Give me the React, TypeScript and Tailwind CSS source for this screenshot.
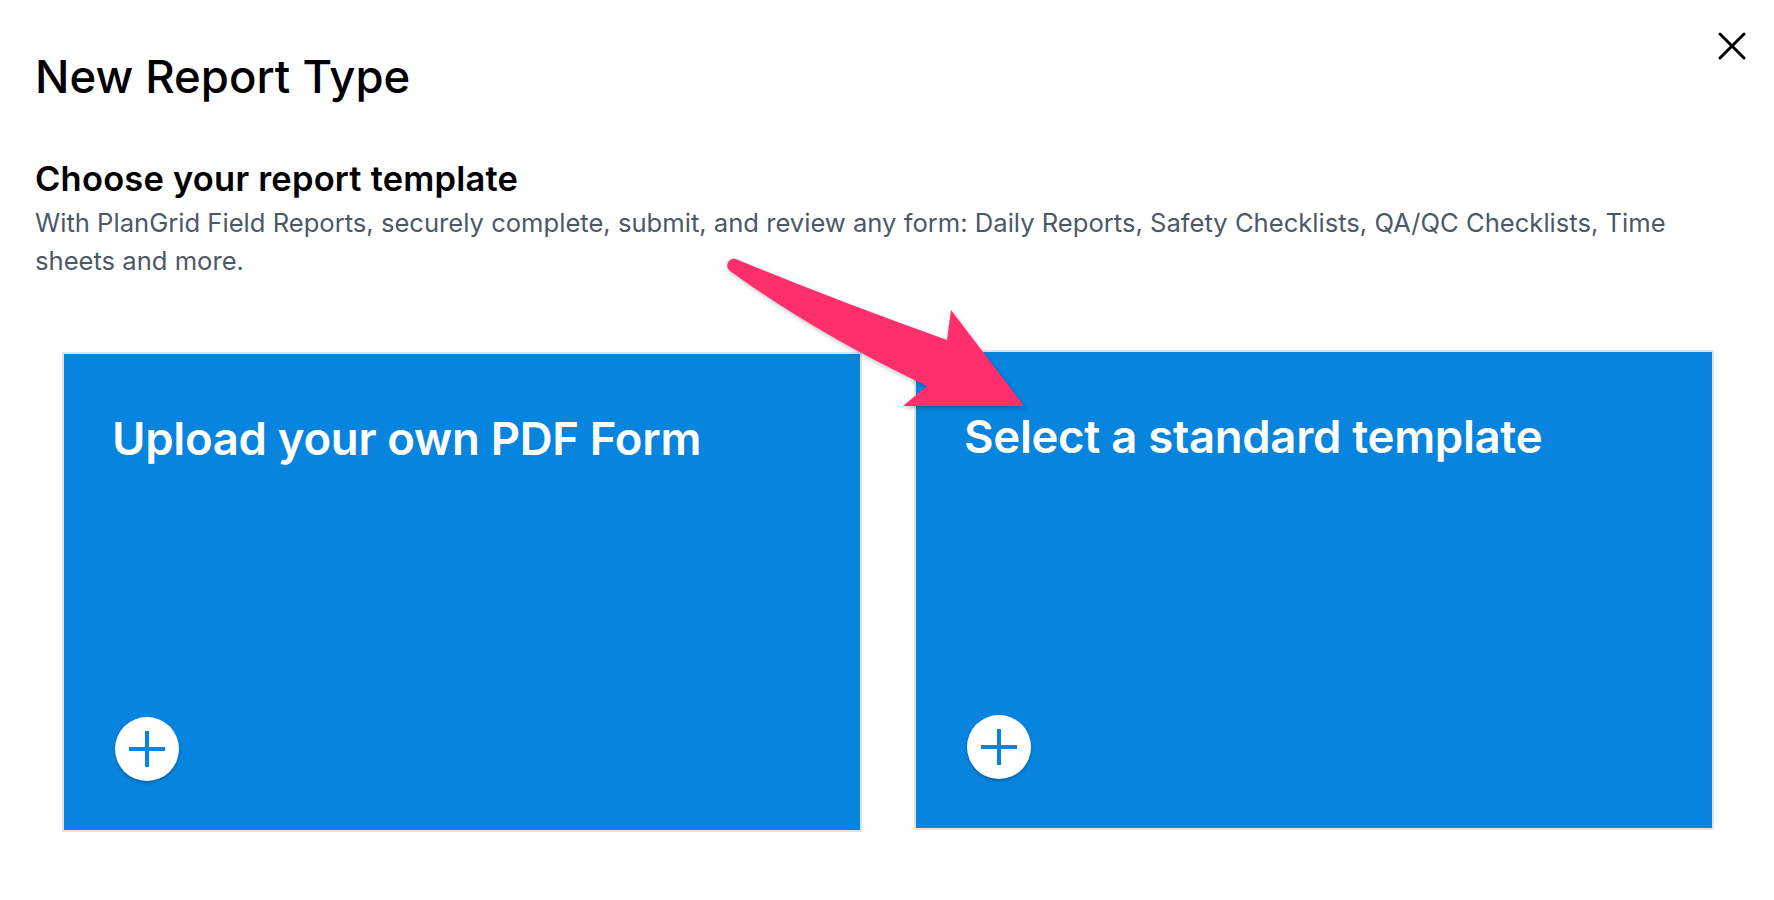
function TemplateCard({ title, lift }: { title: string; lift?: boolean }) {
  return (
    <div
      className={
        "flex h-[480px] w-[800px] flex-col justify-between border-2 border-[#dfe5ea] bg-[#0784de] pt-[62px] pr-[48px] pb-[49px] pl-[48px] " +
        (lift ? "" : "mt-[2px]")
      }
    >
      <h3 className="text-[45.5px] font-semibold leading-none tracking-[-0.3px] text-white">{title}</h3>
      <button className="ml-[3px] flex h-[64px] w-[64px] items-center justify-center rounded-full bg-white shadow-[0_2px_3px_rgba(0,0,0,0.25)]">
        <svg viewBox="0 0 36 36" className="h-[36px] w-[36px]" stroke="#0784de" strokeWidth="4">
          <line x1="18" y1="0" x2="18" y2="36" />
          <line x1="0" y1="18" x2="36" y2="18" />
        </svg>
      </button>
    </div>
  );
}

export default function App() {
  return (
    <div className="relative min-h-screen bg-white font-['Inter','Liberation_Sans',sans-serif] text-black">
      <button className="absolute top-[32px] right-[28px] h-[28px] w-[28px]">
        <svg viewBox="0 0 28 28" className="h-full w-full" fill="none" stroke="#000" strokeWidth="3" strokeLinecap="round">
          <line x1="2" y1="2" x2="26" y2="26" />
          <line x1="26" y1="2" x2="2" y2="26" />
        </svg>
      </button>

      <header className="px-[35px] pt-[54px]">
        <h1 className="text-[45.5px] font-medium leading-none">New Report Type</h1>
        <h2 className="mt-[62px] text-[34.5px] font-semibold leading-none tracking-[0.2px]">Choose your report template</h2>
        <p className="mt-[8px] max-w-[1650px] text-[25.6px] leading-[38px] text-[#4b5967]">
          With PlanGrid Field Reports, securely complete, submit, and review any form: Daily Reports, Safety Checklists, QA/QC Checklists, Time sheets and more.
        </p>
      </header>

      <main className="mt-[70px] flex items-start gap-[52px] pl-[62px]">
        <TemplateCard title="Upload your own PDF Form" />
        <TemplateCard title="Select a standard template" lift />
      </main>

      {/* callout arrow pointing at the second card */}
      <svg
        className="pointer-events-none absolute top-[240px] left-[700px] h-[180px] w-[340px] drop-shadow-[1px_2px_2px_rgba(0,0,0,0.25)]"
        viewBox="0 0 340 180"
      >
        <path
          d="M 38 20 Q 140 62 247 100 L 251 70 L 324 166 L 203 166 L 227 146 Q 120 96 30 31 A 6 6 0 0 1 38 20 Z"
          fill="#ff2f6e"
        />
      </svg>
    </div>
  );
}
